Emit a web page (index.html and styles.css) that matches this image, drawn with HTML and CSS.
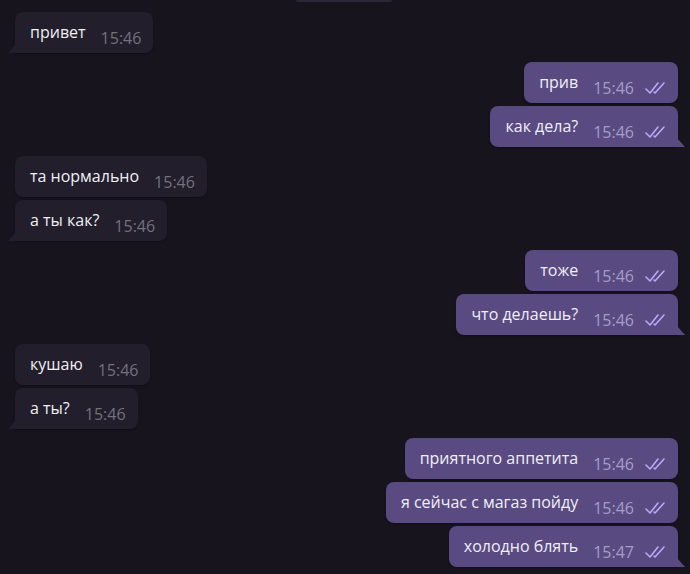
FILE: index.html
```html
<!DOCTYPE html>
<html lang="ru">
<head>
    <meta charset="UTF-8">
    <title>Чат</title>
    <link rel="stylesheet" href="styles.css">
</head>
<body>
    <div class="chat">
        <div class="date-pill"></div>

        <!-- входящие -->
        <div class="group in">
            <div class="msg tail"><span class="text">привет</span><span class="meta">15:46</span></div>
        </div>

        <!-- исходящие -->
        <div class="group out">
            <div class="msg"><span class="text">прив</span><span class="meta">15:46<svg class="checks" viewBox="0 0 22 12"><polyline points="1,7 5,11 13,1"/><polyline points="9,10 10,11 19,1"/></svg></span></div>
            <div class="msg tail"><span class="text">как дела?</span><span class="meta">15:46<svg class="checks" viewBox="0 0 22 12"><polyline points="1,7 5,11 13,1"/><polyline points="9,10 10,11 19,1"/></svg></span></div>
        </div>

        <div class="group in">
            <div class="msg"><span class="text">та нормально</span><span class="meta">15:46</span></div>
            <div class="msg tail"><span class="text">а ты как?</span><span class="meta">15:46</span></div>
        </div>

        <div class="group out">
            <div class="msg"><span class="text">тоже</span><span class="meta">15:46<svg class="checks" viewBox="0 0 22 12"><polyline points="1,7 5,11 13,1"/><polyline points="9,10 10,11 19,1"/></svg></span></div>
            <div class="msg tail"><span class="text">что делаешь?</span><span class="meta">15:46<svg class="checks" viewBox="0 0 22 12"><polyline points="1,7 5,11 13,1"/><polyline points="9,10 10,11 19,1"/></svg></span></div>
        </div>

        <div class="group in">
            <div class="msg"><span class="text">кушаю</span><span class="meta">15:46</span></div>
            <div class="msg tail"><span class="text">а ты?</span><span class="meta">15:46</span></div>
        </div>

        <div class="group out">
            <div class="msg"><span class="text">приятного аппетита</span><span class="meta">15:46<svg class="checks" viewBox="0 0 22 12"><polyline points="1,7 5,11 13,1"/><polyline points="9,10 10,11 19,1"/></svg></span></div>
            <div class="msg"><span class="text">я сейчас с магаз пойду</span><span class="meta">15:46<svg class="checks" viewBox="0 0 22 12"><polyline points="1,7 5,11 13,1"/><polyline points="9,10 10,11 19,1"/></svg></span></div>
            <div class="msg tail"><span class="text">холодно блять</span><span class="meta">15:47<svg class="checks" viewBox="0 0 22 12"><polyline points="1,7 5,11 13,1"/><polyline points="9,10 10,11 19,1"/></svg></span></div>
        </div>
    </div>
</body>
</html>
```

FILE: styles.css
```css
body {
    margin: 0;
    padding: 0;
    background: #17141e;
    font-family: "Open Sans", "Noto Sans", sans-serif;
    font-size: 16px;
    color: #f0eff4;
    height: 574px;
    overflow: hidden;
}
.chat {
    display: flex;
    flex-direction: column;
    gap: 9px;
    padding: 12px 12px 0 15px;
    position: relative;
}
.date-pill {
    position: absolute;
    left: 296px;
    top: 0;
    width: 96px;
    height: 2px;
    background: #2b2736;
    border-radius: 0 0 3px 3px;
}
.group {
    display: flex;
    flex-direction: column;
    gap: 3px;
}
.group.in {
    align-items: flex-start;
}
.group.out {
    align-items: flex-end;
}
.msg {
    position: relative;
    display: flex;
    align-items: flex-start;
    height: 41px;
    box-sizing: border-box;
    padding: 10px 12px 5px 15px;
    border-radius: 8px;
    box-shadow: 0 1px 2px rgba(0, 0, 0, 0.35);
}
.in .msg {
    background: #221e2b;
}
.out .msg {
    background: #594a82;
    padding-right: 11px;
}
.text {
    line-height: 20px;
    white-space: nowrap;
}
.meta {
    display: flex;
    align-items: center;
    margin-top: 6px;
    margin-left: 15px;
    line-height: 20px;
    white-space: nowrap;
}
.in .meta {
    color: #74707f;
}
.out .meta {
    color: #a69dc6;
}
.checks {
    width: 22px;
    height: 12px;
    margin-left: 11px;
    fill: none;
    stroke: #b9a9f4;
    stroke-width: 1.6;
    stroke-linecap: round;
    stroke-linejoin: round;
}
/* хвостики у последнего сообщения */
.in .msg.tail {
    border-bottom-left-radius: 0;
}
.out .msg.tail {
    border-bottom-right-radius: 0;
}
.msg.tail::after {
    content: "";
    position: absolute;
    bottom: 0;
    width: 8px;
    height: 9px;
}
.in .msg.tail::after {
    left: -7px;
    background: #221e2b;
    clip-path: polygon(100% 0, 100% 100%, 0 100%);
}
.out .msg.tail::after {
    right: -7px;
    background: #594a82;
    clip-path: polygon(0 0, 100% 100%, 0 100%);
}
```
